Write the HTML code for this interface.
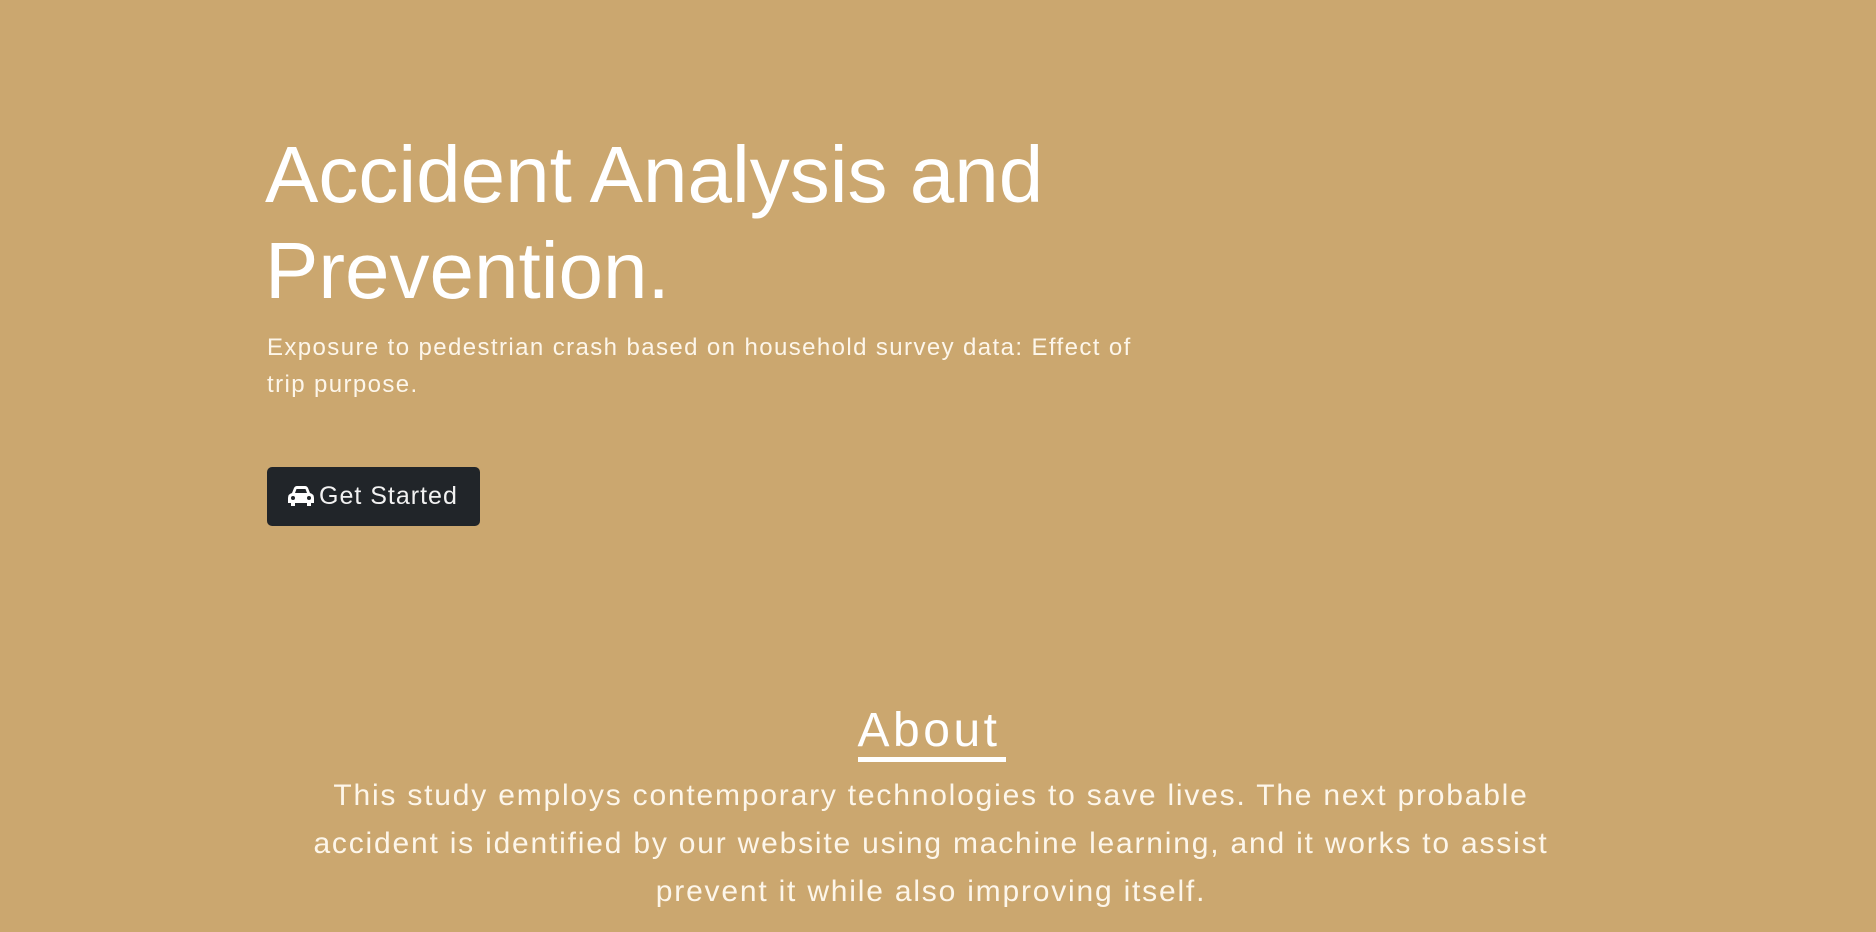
<!DOCTYPE html>
<html><head><meta charset="utf-8"><style>
html,body{margin:0;padding:0;width:1876px;height:932px;overflow:hidden;background:#cba76f;font-family:"Liberation Sans",sans-serif;color:#fff}
h1{position:absolute;left:265px;top:127px;margin:0;font-size:80px;line-height:96px;font-weight:normal}
.sub{position:absolute;left:267px;top:329px;font-size:24px;line-height:37px;color:#fdf6ea;letter-spacing:1.4px}
.btn{position:absolute;left:267px;top:467px;width:213px;height:59px;background:#212529;border-radius:5px;font-size:25px;line-height:59px;color:#f2f2f2}
.btn svg{position:absolute;left:21px;top:19px}
.btn span{position:absolute;left:52px;top:0;letter-spacing:1px}
.about{position:absolute;left:0;width:1876px;top:701px;text-align:center;font-size:48px;line-height:60px}
.about span{display:inline-block;border-bottom:5px solid #fff;line-height:52px;letter-spacing:3.5px;padding-right:6px;margin-right:12px}
.p{position:absolute;left:0;width:1862px;top:772px;text-align:center;font-size:30px;line-height:48px;color:#fdf6ea;letter-spacing:1.8px}
</style></head><body>
<h1>Accident Analysis and<br>Prevention.</h1>
<div class="sub">Exposure to pedestrian crash based on household survey data: Effect of<br>trip purpose.</div>
<div class="btn"><svg width="26" height="21" viewBox="0 0 26 21"><path fill="#fff" d="M6 2 Q7 0 9 0 H17 Q19 0 20 2 L22 7 Q26 8 26 12 V17 H23 V20 H19 V17 H7 V20 H3 V17 H0 V12 Q0 8 4 7 Z M7 7 H19 L17.5 3 H8.5 Z"/><circle cx="5" cy="12" r="2" fill="#212529"/><circle cx="21" cy="12" r="2" fill="#212529"/></svg><span>Get Started</span></div>
<div class="about"><span>About</span></div>
<div class="p">This study employs contemporary technologies to save lives. The next probable<br>accident is identified by our website using machine learning, and it works to assist<br>prevent it while also improving itself.</div>
</body></html>
